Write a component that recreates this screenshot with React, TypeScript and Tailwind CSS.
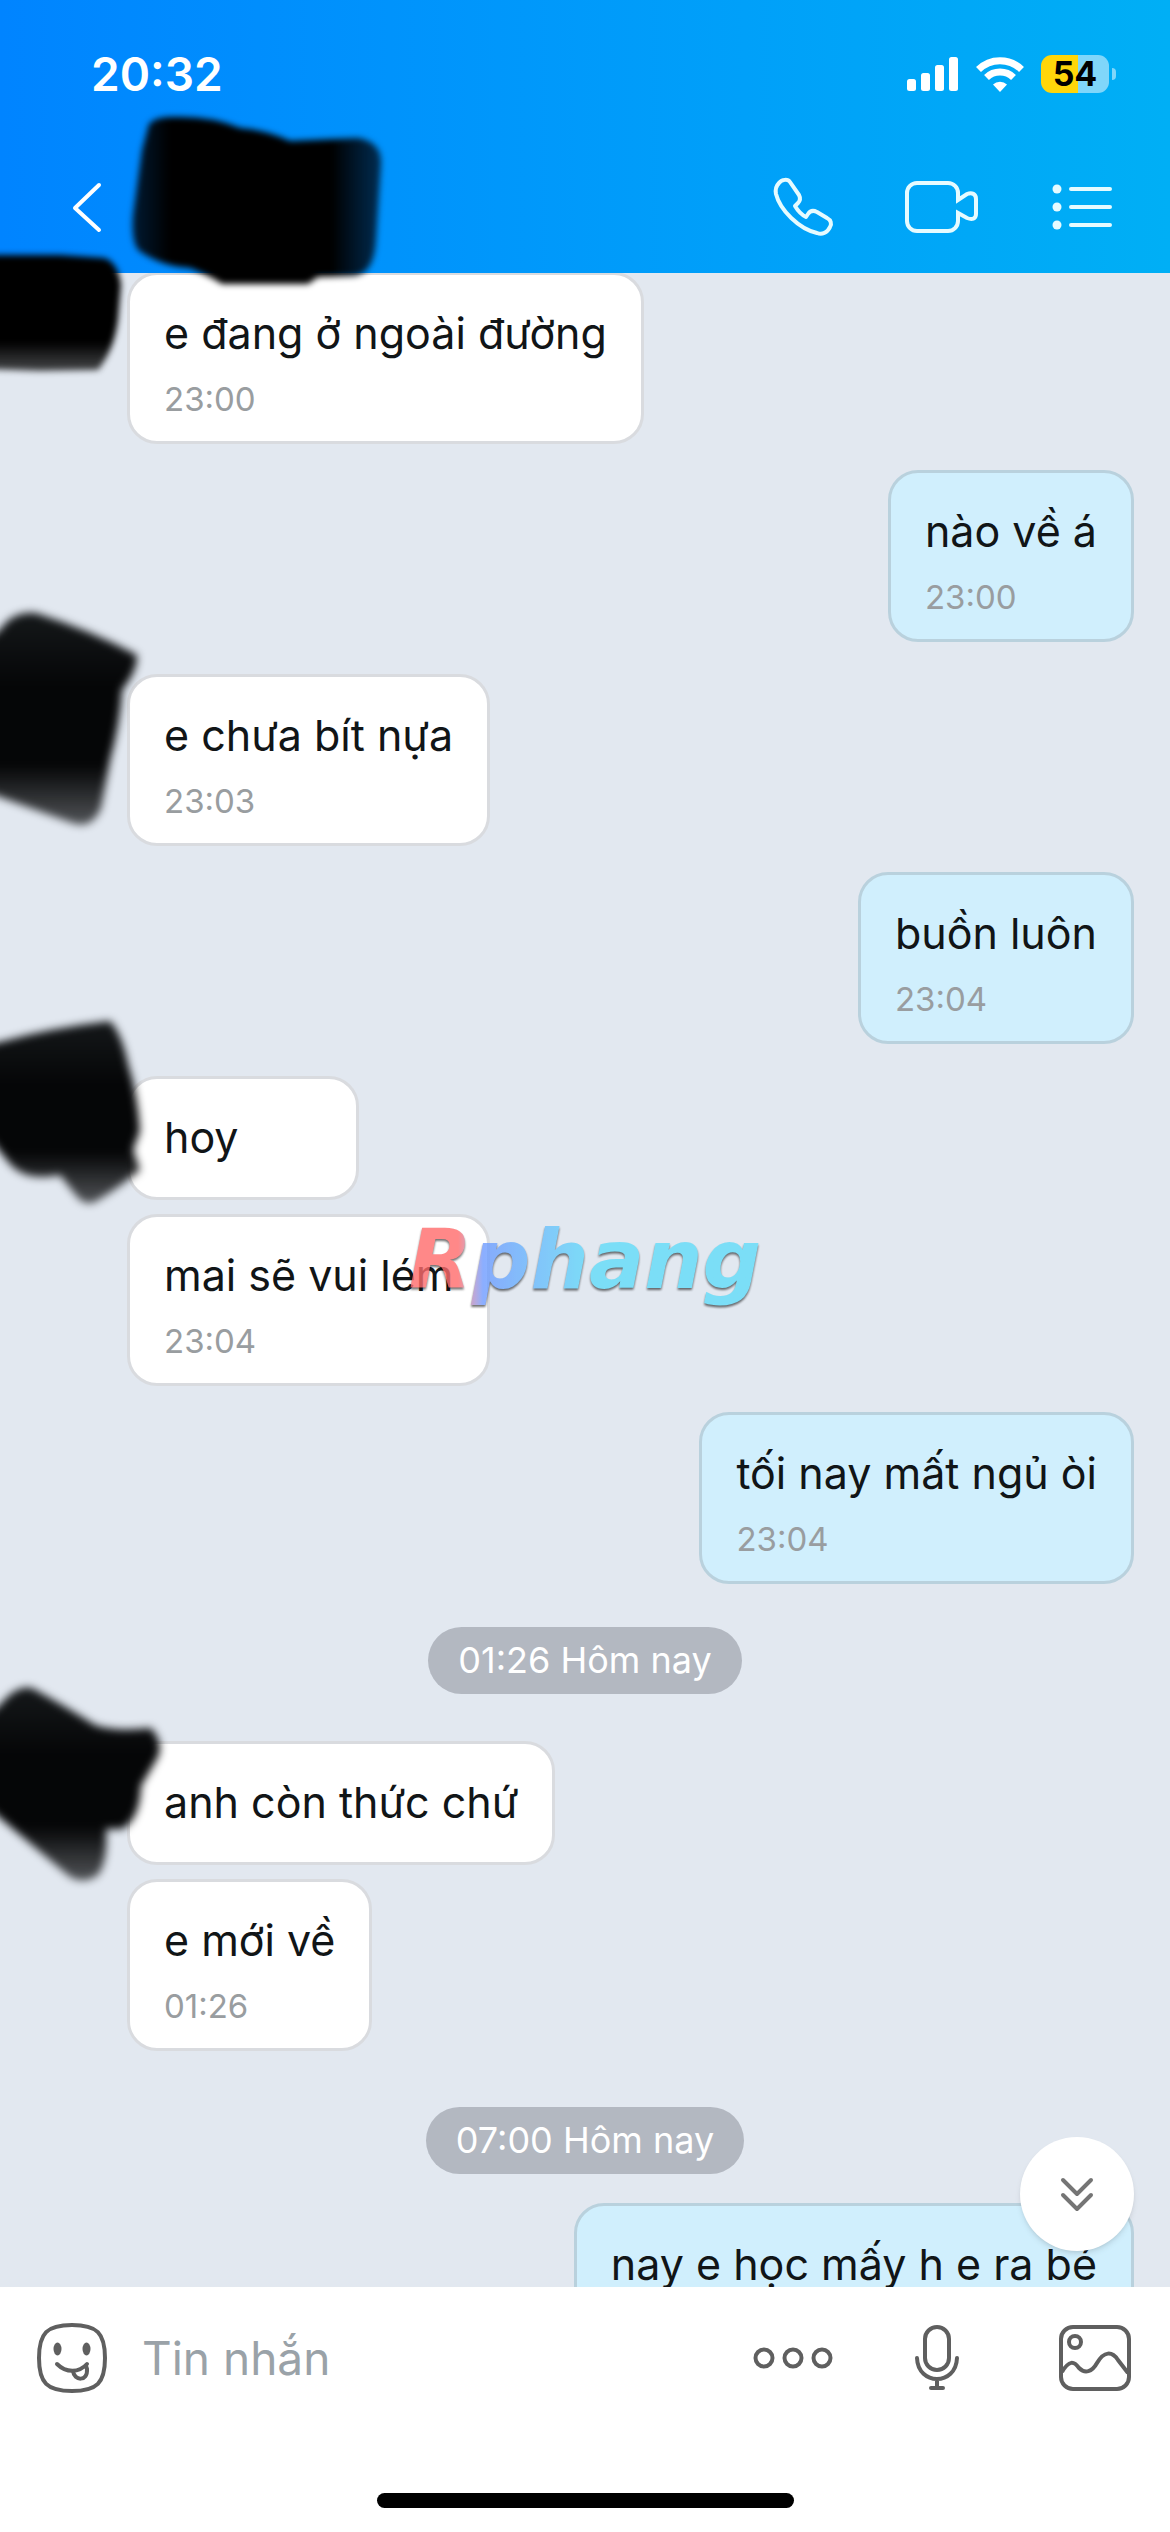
import type { ReactNode } from 'react';

interface ChatMessage {
  kind: 'them' | 'me' | 'divider';
  text: string;
  time?: string;
  spacing: string;
  scribble?: string;
}

const messages: ChatMessage[] = [
  { kind: 'them', text: 'e đang ở ngoài đường', time: '23:00', spacing: '-mt-px' },
  { kind: 'me', text: 'nào về á', time: '23:00', spacing: 'mt-[26px]' },
  {
    kind: 'them',
    text: 'e chưa bít nựa',
    time: '23:03',
    spacing: 'mt-8',
    scribble: 'M-20 50 L0 36 Q12 17 36 19 Q90 36 137 61 Q138 76 122 96 Q120 130 110 166 L101 214 Q92 236 72 229 L-20 196Z',
  },
  { kind: 'me', text: 'buồn luôn', time: '23:04', spacing: 'mt-[26px]' },
  {
    kind: 'them',
    text: 'hoy',
    spacing: 'mt-8',
    scribble: 'M-20 50 L0 46 Q50 32 110 25 Q122 38 128 68 Q138 100 140 135 L133 154 L140 174 Q118 192 100 203 Q88 212 78 202 L60 179 Q26 186 10 168 L-20 130Z',
  },
  { kind: 'them', text: 'mai sẽ vui lém', time: '23:04', spacing: 'mt-3.5' },
  { kind: 'me', text: 'tối nay mất ngủ òi', time: '23:04', spacing: 'mt-[26px]' },
  { kind: 'divider', text: '01:26 Hôm nay', spacing: 'mt-[43px]' },
  {
    kind: 'them',
    text: 'anh còn thức chứ',
    spacing: 'mt-[47px]',
    scribble: 'M-20 60 L0 44 Q16 24 32 27 Q60 42 95 64 Q115 71 151 67 Q164 82 158 96 L141 125 Q140 158 122 168 L106 168 Q108 200 98 214 Q84 224 70 216 L-20 140Z',
  },
  { kind: 'them', text: 'e mới về', time: '01:26', spacing: 'mt-3.5' },
  { kind: 'divider', text: '07:00 Hôm nay', spacing: 'mt-14' },
  { kind: 'me', text: 'nay e học mấy h e ra bé', spacing: 'mt-[29px]' },
];

function Scribble({ path, id }: { path: string; id: string }) {
  return (
    <svg viewBox="0 0 176 256" className="absolute left-0 -top-20 z-10 h-64 w-44" aria-hidden="true">
      <defs>
        <linearGradient id={id} x1="0" y1="0" x2="0" y2="1">
          <stop offset="0" stopColor="#15181a" />
          <stop offset="0.35" stopColor="#050607" />
          <stop offset="0.72" stopColor="#050607" />
          <stop offset="1" stopColor="#050607" stopOpacity="0.65" />
        </linearGradient>
      </defs>
      <path d={path} fill={`url(#${id})`} className="blur-[4px]" />
    </svg>
  );
}

function Bubble({ message }: { message: ChatMessage }) {
  const colors = message.kind === 'me' ? 'bg-[#d0effd] border-[#b9d1dd]' : 'bg-white border-[#d9dbdf]';

  return (
    <div
      className={`min-w-[232px] rounded-[30px] border-3 px-[34px] pt-[29px] ${message.time ? 'pb-5' : 'pb-[31px]'} ${colors}`}
    >
      <p className="text-[43px] leading-[58px] whitespace-nowrap text-[#111517]">{message.text}</p>
      {message.time && <p className="mt-[15px] text-[33px] leading-[44px] text-[#999da0]">{message.time}</p>}
    </div>
  );
}

function IconButton({ label, children }: { label: string; children: ReactNode }) {
  return (
    <button type="button" aria-label={label} className="shrink-0">
      {children}
    </button>
  );
}

function StatusBar() {
  return (
    <div className="flex h-[148px] items-center justify-between pr-[54px] pl-[91px]">
      <span className="text-[46px] leading-[56px] font-semibold">20:32</span>
      <div className="flex items-center">
        <svg width="52" height="36" viewBox="0 0 52 36" fill="#fff">
          <rect x="0" y="23" width="9" height="12" rx="2.5" />
          <rect x="14" y="17" width="9" height="18" rx="2.5" />
          <rect x="28" y="9" width="9" height="26" rx="2.5" />
          <rect x="42" y="1" width="9" height="34" rx="2.5" />
        </svg>
        <svg width="50" height="38" viewBox="0 0 50 38" fill="none" stroke="#fff" strokeWidth="7" className="ml-4">
          <path d="M3.500 14.500a30.500 30.500 0 0 1 43 0" />
          <path d="M11.500 22.500a19.500 19.500 0 0 1 27 0" />
          <path d="M25 37l-7-7.500a10 10 0 0 1 14 0z" fill="#fff" stroke="none" />
        </svg>
        <div className="ml-4 flex h-[38px] w-[68px] items-center justify-center rounded-[11px] bg-linear-to-r from-[#ffd60a] from-55% to-[#80d6fa] to-55%">
          <span className="text-[34px] leading-[38px] font-bold text-black">54</span>
        </div>
        <div className="ml-[3px] h-3 w-1 rounded-r-full bg-[#80d6fa]" />
      </div>
    </div>
  );
}

function Header() {
  return (
    <header className="relative z-20 shrink-0 bg-linear-to-r from-[#0084ff] to-[#00aff5] pb-[7px] text-white">
      <StatusBar />
      <div className="flex h-[118px] items-center justify-between pr-[55px] pl-[70px]">
        <IconButton label="Quay lại">
          <svg width="34" height="52" viewBox="0 0 34 52" fill="none" stroke="#fff" strokeWidth="4" strokeLinecap="round" strokeLinejoin="round">
            <path d="M29 4L5 27l24 22" />
          </svg>
        </IconButton>
        <div className="flex items-center gap-[70px]">
          <IconButton label="Gọi thoại">
            <svg width="64" height="60" viewBox="0 0 64 60" fill="none" stroke="#e6fbff" strokeWidth="4" strokeLinejoin="round">
              <path d="M8 6c3-4 9-4 11-1l9 13c2 4 1 6-1 8l-3 3c3 5 7 9 11 11l2-3c2-3 5-4 9-2l10 6c4 2 5 6 3 9-3 6-8 8-13 6C28 52 9 33 5 17c-1-5 0-8 3-11z" />
            </svg>
          </IconButton>
          <IconButton label="Gọi video">
            <svg width="76" height="56" viewBox="0 0 76 56" fill="none" stroke="#e6fbff" strokeWidth="4">
              <path d="M53 21v-7a10 10 0 0 0-10-10H12a10 10 0 0 0-10 10v28a10 10 0 0 0 10 10h31a10 10 0 0 0 10-10v-8l9 5c5 2 9 1 9-4V20c0-5-4-7-9-5z" />
            </svg>
          </IconButton>
          <IconButton label="Tùy chọn">
            <svg width="64" height="48" viewBox="0 0 64 48" fill="#e6fbff" stroke="#e6fbff" strokeLinecap="round">
              <g stroke="none">
                <circle cx="6" cy="6" r="4.500" />
                <circle cx="6" cy="24" r="4.500" />
                <circle cx="6" cy="42" r="4.500" />
              </g>
              <path d="M20 6h39M20 24h39M20 42h39" strokeWidth="4" />
            </svg>
          </IconButton>
        </div>
      </div>

      {/* marker strokes over the contact name and the first avatar */}
      <svg viewBox="0 0 400 300" className="pointer-events-none absolute top-[100px] left-0 h-[300px] w-[400px]" aria-hidden="true">
        <defs>
          <linearGradient id="scribble-name" x1="0" y1="0" x2="1" y2="0">
            <stop offset="0" stopColor="#001a33" />
            <stop offset="0.15" stopColor="#000" />
            <stop offset="0.8" stopColor="#000" />
            <stop offset="1" stopColor="#001a33" stopOpacity="0.85" />
          </linearGradient>
          <linearGradient id="scribble-first" x1="0" y1="0" x2="0" y2="1">
            <stop offset="0.75" stopColor="#000" />
            <stop offset="1" stopColor="#111" stopOpacity="0.75" />
          </linearGradient>
        </defs>
        <path
          d="M149 24Q156 16 175 17Q212 16 240 28Q266 30 290 41L358 38Q382 42 381 64L376 140Q374 174 354 176L318 177L308 184L222 184Q210 176 190 168Q160 166 138 150Q131 140 133 115L142 50Z"
          fill="url(#scribble-name)"
          className="blur-[3px]"
        />
        <path
          d="M-20 155L60 155L104 158Q118 162 121 185L118 220Q114 250 98 270L40 271L-20 269Z"
          fill="url(#scribble-first)"
          className="blur-[3px]"
        />
      </svg>
    </header>
  );
}

function Composer() {
  return (
    <footer className="relative z-20 shrink-0 bg-white">
      <form className="flex h-[142px] items-center pr-[38px] pl-9">
        <IconButton label="Biểu cảm">
          <svg width="72" height="72" viewBox="0 0 72 72" fill="none" stroke="#5f5f5f" strokeWidth="4" strokeLinecap="round">
            <path d="M36 3c25 0 33 8 33 33s-8 33-33 33S3 61 3 36 11 3 36 3z" />
            <ellipse cx="21.500" cy="27" rx="4" ry="6.500" fill="#5f5f5f" stroke="none" />
            <ellipse cx="50.500" cy="27" rx="4" ry="6.500" fill="#5f5f5f" stroke="none" />
            <path d="M21 42c9 9 22 9 30 0" />
            <path d="M37 49c1 10 15 11 14-2l-1-3" />
          </svg>
        </IconButton>
        <input
          type="text"
          aria-label="Tin nhắn"
          placeholder="Tin nhắn"
          className="ml-[34px] min-w-0 flex-1 text-[46px] leading-[60px] outline-none placeholder:text-[#9aa2a8]"
        />
        <div className="flex items-center">
          <IconButton label="Thêm">
            <svg width="82" height="24" viewBox="0 0 82 24" fill="none" stroke="#5f5f5f" strokeWidth="4">
              <circle cx="12" cy="12" r="8.500" />
              <circle cx="41" cy="12" r="8.500" />
              <circle cx="70" cy="12" r="8.500" />
            </svg>
          </IconButton>
          <span className="w-20" />
          <IconButton label="Ghi âm">
            <svg width="46" height="66" viewBox="0 0 46 66" fill="none" stroke="#5f5f5f" strokeWidth="4" strokeLinecap="round">
              <rect x="11" y="2" width="24" height="43" rx="12" />
              <path d="M3 33c1 28 39 28 40 0M23 54v9M17 63h12" />
            </svg>
          </IconButton>
          <span className="w-[98px]" />
          <IconButton label="Gửi ảnh">
            <svg width="74" height="68" viewBox="0 0 74 68" fill="none" stroke="#5f5f5f" strokeWidth="4">
              <rect x="3" y="3" width="68" height="62" rx="12" />
              <circle cx="17" cy="18" r="6" />
              <path d="M4 48c7-12 12-11 17-4 6 6 13 4 18-5 7-12 15-12 21-3l10 13" />
            </svg>
          </IconButton>
        </div>
      </form>
      <div className="flex h-[103px] justify-center pt-16">
        <div className="h-[15px] w-[417px] rounded-full bg-black" />
      </div>
    </footer>
  );
}

export default function App() {
  return (
    <div className="relative flex h-screen flex-col overflow-hidden bg-[#e2e8f0] font-['Inter','Noto_Sans',sans-serif]">
      <Header />

      <main className="relative min-h-0 flex-1 overflow-hidden">
        <div className="flex flex-col">
          {messages.map((message, index) => {
            if (message.kind === 'divider') {
              return (
                <div key={index} className={`flex justify-center ${message.spacing}`}>
                  <span className="rounded-full bg-[#b3b8c1] px-[30px] text-[36px] leading-[67px] text-white">
                    {message.text}
                  </span>
                </div>
              );
            }

            return (
              <div
                key={index}
                className={`relative flex pr-9 pl-[127px] ${message.kind === 'me' ? 'justify-end' : 'justify-start'} ${message.spacing}`}
              >
                {message.scribble && <Scribble path={message.scribble} id={`scribble-${index}`} />}
                <Bubble message={message} />
              </div>
            );
          })}
        </div>

        <button
          type="button"
          aria-label="Xuống cuối"
          className="absolute right-9 bottom-9 z-10 flex size-[114px] items-center justify-center rounded-full bg-white shadow-md"
        >
          <svg width="34" height="36" viewBox="0 0 34 36" fill="none" stroke="#757575" strokeWidth="4" strokeLinecap="round" strokeLinejoin="round">
            <path d="M3 4l14 14L31 4M3 19l14 14 14-14" />
          </svg>
        </button>
      </main>

      <Composer />

      <div className="pointer-events-none absolute inset-0 z-30 flex items-center justify-center pb-3">
        <span className="bg-linear-to-r from-[#ff6b6b] from-14% via-[#6f9bff] via-21% to-[#62dcf9] to-52% bg-clip-text font-['DejaVu_Sans',sans-serif] text-[82px] leading-[110px] font-bold text-transparent italic opacity-80 drop-shadow-[0_2px_1px_rgba(0,0,0,0.7)]">
          Rphang
        </span>
      </div>
    </div>
  );
}
